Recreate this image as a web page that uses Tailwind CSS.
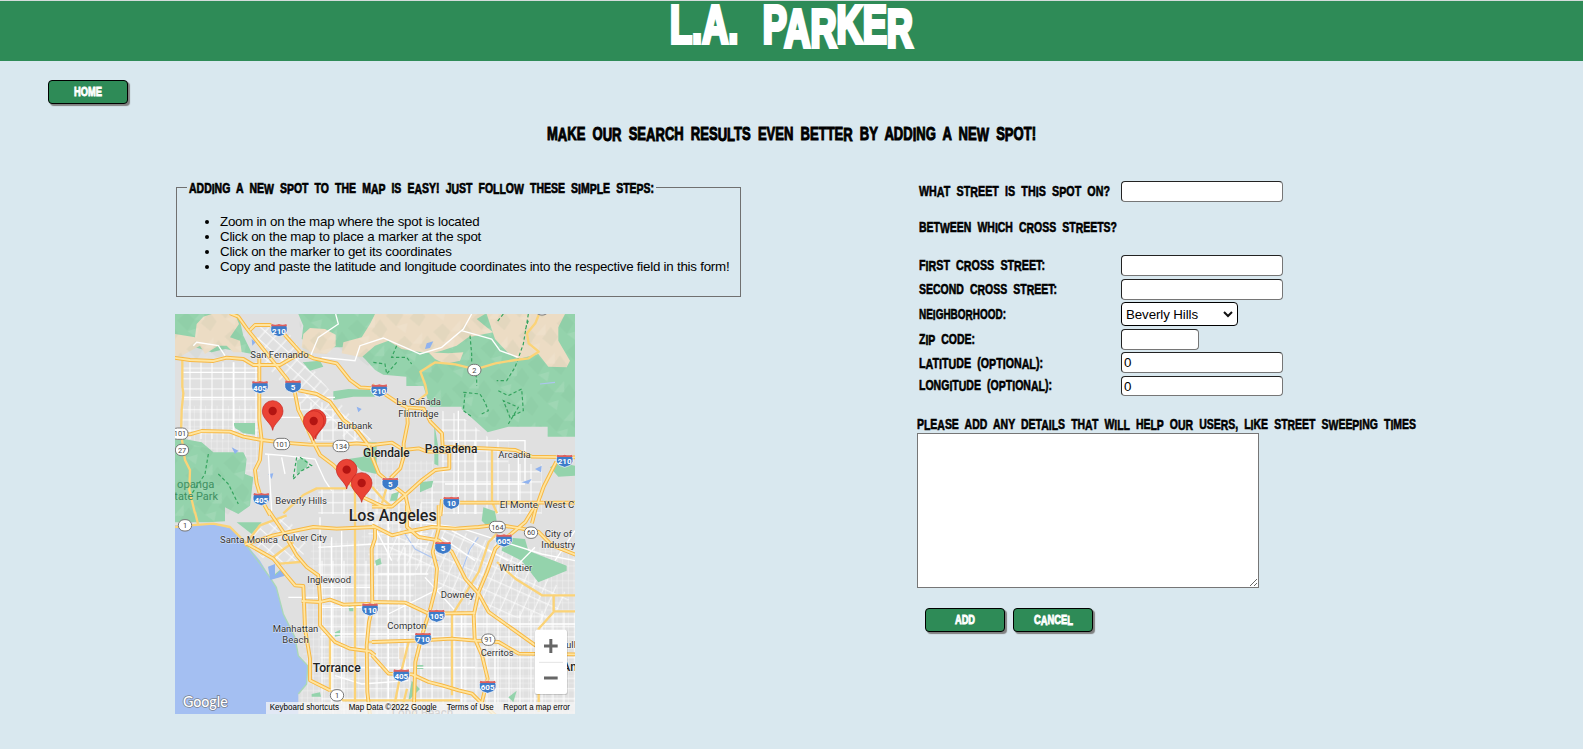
<!DOCTYPE html>
<html lang="en">
<head>
<meta charset="utf-8">
<title>L.A. Parker</title>
<script src="https://cdn.jsdelivr.net/npm/@tailwindcss/browser@4"></script>
</head>
<body class="h-[749px] overflow-hidden bg-[#d9e8ef] font-['Liberation_Sans',sans-serif] text-[13.333px] leading-[15px] text-black">
<header class="flex h-[61px] justify-center border-t border-[#d5dcdc] bg-[#2e8b57]">
  <h1><svg class="block h-[60px] w-[247px] overflow-visible fill-white stroke-white stroke-[4px] text-[53px] font-bold [word-spacing:21px]"><text class="bouncy" data-step="4" x="2" y="42" textLength="243" lengthAdjust="spacingAndGlyphs">L.A. PARKER</text></svg></h1>
</header>

<nav class="pt-[19px] pl-12">
  <button class="flex h-6 w-20 items-center justify-center rounded-[4px] border border-black bg-[#2e8b57] shadow-[2px_2px_1px_#808080]"><svg class="h-4 w-7 overflow-visible fill-white stroke-white stroke-[.9px] text-[13.5px] font-bold"><text class="bouncy" data-step="1" x="0" y="12" textLength="28" lengthAdjust="spacingAndGlyphs">HOME</text></svg></button>
</nav>

<h2 class="mt-[19px] flex justify-center"><svg class="h-[22px] w-[489px] overflow-visible stroke-black stroke-[1px] text-[18.5px] font-bold [word-spacing:5px]"><text class="bouncy" data-step="1.4" x="0" y="16.5" textLength="489" lengthAdjust="spacingAndGlyphs">MAKE OUR SEARCH RESULTS EVEN BETTER BY ADDING A NEW SPOT!</text></svg></h2>

<main class="mt-[35px] flex pl-[175px]">
  <section class="w-[742px] shrink-0">
    <fieldset class="ml-px h-[117px] w-[565px] min-w-0 border border-[#707070] pl-[10px]">
      <legend class="h-[15px] px-[2px]"><svg class="block h-[15px] w-[465px] overflow-visible stroke-black stroke-[.7px] text-[14.5px] font-bold [word-spacing:4.5px]"><text class="bouncy" data-step="1" x="0" y="12.5" textLength="465" lengthAdjust="spacingAndGlyphs">ADDING A NEW SPOT TO THE MAP IS EASY! JUST FOLLOW THESE SIMPLE STEPS:</text></svg></legend>
      <ul class="mt-[19px] ml-[33px] list-outside list-disc tracking-[-0.235px] whitespace-nowrap">
        <li>Zoom in on the map where the spot is located</li>
        <li>Click on the map to place a marker at the spot</li>
        <li>Click on the marker to get its coordinates</li>
        <li>Copy and paste the latitude and longitude coordinates into the respective field in this form!</li>
      </ul>
    </fieldset>

    <svg class="mt-[17px] block h-[400px] w-[400px] font-['Roboto',sans-serif]" viewBox="0 0 1200 1200">
      <defs>
        <pattern id="grid" width="33" height="31" patternUnits="userSpaceOnUse"><path d="M0 8H33M12 0V31" stroke="#fff" stroke-width="2.8"/></pattern>
        <pattern id="fine" width="17" height="22" patternUnits="userSpaceOnUse"><path d="M0 8H17M7 0V22" stroke="#fff" stroke-width="1.5" opacity=".6"/></pattern>
        <pattern id="slant" width="32" height="30" patternUnits="userSpaceOnUse" patternTransform="rotate(42)"><path d="M0 8H32M12 0V30" stroke="#fff" stroke-width="2.6"/></pattern>
        <pattern id="tilt" width="31" height="37" patternUnits="userSpaceOnUse" patternTransform="rotate(24)"><path d="M0 8H31M12 0V37" stroke="#fff" stroke-width="2.4"/></pattern>
        <pattern id="relief" width="120" height="90" patternUnits="userSpaceOnUse" patternTransform="rotate(-18)"><path d="M0 20L35 5L50 35L20 60ZM65 50L100 25L112 60L85 82Z" fill="#5a8060" opacity=".06"/><path d="M50 35L88 12L78 44ZM20 60L55 62L40 88Z" fill="#fff" opacity=".1"/></pattern>
        <symbol id="interstate" viewBox="-26 -20 52 40" overflow="visible"><path d="M-22 -17Q-11 -13 0 -17Q11 -13 22 -17Q31 7 14 15L0 20L-14 15Q-31 7 -22 -17Z" fill="#3d7bc9" stroke="#fff" stroke-width="2"/><path d="M-22 -18Q-11 -14 0 -18Q11 -14 22 -18L24 -11H-24Z" fill="#e0605c"/></symbol>
        <symbol id="route" viewBox="-26 -20 52 40" overflow="visible"><rect x="-24" y="-17" width="48" height="34" rx="16" fill="#fff" stroke="#777" stroke-width="3"/></symbol>
        <symbol id="dot" viewBox="-26 -20 52 40" overflow="visible"><rect x="-20" y="-17" width="40" height="34" rx="17" fill="#fff" stroke="#777" stroke-width="3"/></symbol>
        <symbol id="pin" viewBox="-32 -90 64 92" overflow="visible"><path d="M0 0C-3 -22 -31 -33 -31 -58A31 31 0 0 1 31 -58C31 -33 3 -22 0 0Z" fill="#ea4335" stroke="#c5221f" stroke-width="2"/><circle cy="-58" r="12.5" fill="#b31412"/></symbol>
        <g id="freeways" fill="none">
          <g transform="translate(-15 -12)"><path d="M180 10L205 20L230 55L290 130L350 205L374 245L385 300L410 350L432 400L450 435L490 465L530 505L575 560L650 595M240 60L255 45L300 45L340 70L390 125L430 145L500 160L540 210L570 232L615 235M10 143L60 150L130 153L170 143L220 147L250 165L330 165L390 130M268 145V330L275 390L270 450L255 480L260 520L275 570L300 615M10 370L60 373L95 363L180 365L220 380L275 390L340 398L420 404H520L560 400L615 405M372 238L440 252L480 275L520 330L560 360L595 405L612 440"/></g>
          <g transform="translate(591 -12)"><path d="M0 225L20 240L80 280L105 292L155 296L175 335L210 370L212 410L340 415L430 420L480 440L615 442M105 292L107 340L95 400V440L85 475L55 505M0 405L60 398L95 420L140 415L165 425H230M0 590L60 590L100 555L150 510L190 480L232 475V425M0 440L20 490L55 520L100 555L110 600L120 620M240 578H615M205 618L210 568M553 455L515 530L490 600L480 640"/></g>
          <g transform="translate(-15 594)"><path d="M295 -6L340 60L380 130L410 165L445 190L450 260V340L495 390L540 410L600 418L615 430M225 98L310 70L380 55L430 45L500 50L615 45M395 267L450 270L480 263L520 278L612 275M615 50V80L605 110L607 290L597 330L590 400L592 540L600 610M230 95L310 140L350 190L375 220L400 222L405 350L420 440V505L480 535"/></g>
          <g transform="translate(591 594)"><path d="M0 40L60 70L100 60L180 45L250 50L320 45L360 40L400 42L450 50L500 60L540 100L615 130M105 -20L105 45L140 75L200 85L240 120L280 200L320 245L350 300L420 350L490 400L525 427M200 -20L200 50L182 120L195 170L190 230L175 290L150 370L130 450L125 610M490 -20L460 30L400 80L370 110L345 180L320 240L305 310L308 380L330 430L347 500L330 570M0 270L100 272L170 305L310 303M0 390L150 385L240 380L300 385L380 390L440 425L615 427M0 430L50 485L120 487L170 510L210 520L260 535L300 545L330 575L370 610"/></g>
        </g>
      </defs>
      <rect width="1200" height="1200" fill="#e0e0e0"/>
      <path d="M20 275H255V520H20ZM560 440H780V680H560ZM550 700H1200V1200H370L410 680H600Z" fill="url(#fine)"/>
      <path d="M20 145H255V375H20ZM365 265H480L560 380H400ZM430 525H700V600H430ZM800 290L850 300L940 370L1000 380V600H720L800 450ZM1000 450H1100V600H1000ZM580 620H760V780H580ZM430 740H720L700 1200H440ZM720 890H1200V1170H720Z" fill="url(#grid)"/>
      <path d="M245 40L330 40L440 200L590 380L520 380L370 260L250 130ZM210 670L330 600L400 700L360 760L260 730Z" fill="url(#slant)"/>
      <path d="M640 640L850 650L1000 700L1190 850L1100 930L870 870L750 780L640 730Z" fill="url(#tilt)"/>

      <g fill="#94d3ac">
        <path d="M0 0H190L205 65L232 120L150 105L110 115L60 100L0 130Z"/>
        <path d="M370 0H1200V368H1118V338H1000L938 355L905 325L860 285V278H765L745 216H694V188L625 182L600 168L570 135L560 125L520 100L440 100L380 75L385 35Z"/>
        <path d="M0 370L80 385L115 415L205 415L215 435L210 480L235 490L225 575L190 600L150 580L150 622L100 625L45 625H0Z"/>
        <path d="M175 327H240V362L205 358L180 342ZM475 232L520 225L585 228L600 248H535L475 258ZM383 145L435 140L445 158L405 170ZM580 385H605V480L560 470L520 435L565 428ZM778 330L790 400V455L778 450ZM735 505L775 500L770 520L735 535ZM650 540L672 533L665 560L645 560ZM1125 460L1150 445L1200 455V485L1150 488ZM365 440L385 430L400 445L395 460L365 480ZM600 740L616 732L620 750L604 755ZM990 670L1050 675L1060 710L1110 730L1175 755L1175 770L1090 805L1040 740L980 710ZM925 580L960 592L965 620L940 640L920 620ZM300 780L318 765L310 790L290 795ZM480 955L495 948V965L480 968ZM725 1053H745V1065H725ZM410 1140L435 1135L438 1148H410ZM1000 1150L1025 1130L1015 1165ZM520 875L535 880V892H523ZM710 1100L735 1125L700 1160ZM185 625L260 625L230 660Z"/>
      </g>
      <g fill="#ecdcc4">
        <path d="M65 30L85 8L110 0H180L192 30L165 70L195 80L200 115L175 115L155 95L130 95L90 120L75 95L20 125L0 130V60L60 70Z"/>
        <path d="M385 60L405 42L450 45L482 62V95L455 120L415 118L380 100Z"/>
        <path d="M600 0H930L905 15L935 40L955 55L880 70L845 95L800 110L770 118L740 115L680 105L640 80L600 95L560 130L500 118L505 85L560 70L585 30Z"/>
        <path d="M935 0H1170L1150 40L1150 80L1185 140L1175 160L1120 158L1090 120L1030 135L1000 118L960 75Z"/>
        <path d="M760 115L820 118L865 115L855 140L810 150L780 135Z"/>
        <path d="M672 1000H700V1035H672Z" opacity=".7"/>
      </g>
      <path d="M0 0H200L230 120L0 140ZM370 0H1200V368H1118V338H938L860 278H765L745 216H694V188L600 170L520 115L385 120ZM0 380L215 430L225 590L100 635H0Z" fill="url(#relief)"/>

      <path d="M0 634L50 634L120 630L175 645L213 690L255 740L285 790L304 820L325 900L360 970L370 1025L398 1055L395 1110L370 1140V1200H0Z" fill="#a4bff2"/>
      <path d="M213 692L285 790L304 820L325 900L360 970L370 1025L398 1055L395 1110L370 1140" fill="none" stroke="#a9d8b8" stroke-width="4"/>
      <path d="M279 758L300 750V785L320 765L330 785L286 798ZM755 88L775 82L765 102L750 105ZM230 75L242 85L232 95ZM280 480L295 478L290 495ZM1040 505L1070 495L1060 510ZM1080 465L1100 455L1098 475ZM170 400L190 410L180 420ZM545 278L560 285L550 295Z" fill="#8fb2ef"/>
      <path d="M690 660L720 705L790 740M1095 210L1140 205M860 770L885 705L910 670" fill="none" stroke="#adc5f0" stroke-width="3.5"/>

      <g fill="none" stroke="#fff" stroke-width="4">
        <path d="M55 95L65 85L130 95L150 125M20 175H255M20 250H480M270 310H470M175 145V360M405 130L430 70L490 30L482 0M440 130L540 140L555 95L625 72L690 100L735 120L800 100L865 45L890 0M860 50L950 75L975 110L1030 130M270 420L330 425L420 435L450 500L470 530M690 620L850 640L1100 720L1200 740M640 900L800 820M430 700L600 690M435 610V900M470 670V1170M500 650V1170M440 820H590M440 880H590M440 960H760M340 850H430M430 1060H900M590 620L650 740M750 790L850 900M800 670L900 740M830 650L1000 740M820 380H1050V500M850 290V600M900 380V600M1030 430V560M810 510H1050M760 930H1200M1080 950V1170M860 900V1170M960 1000V1170M480 1085L560 1110L700 1100M600 690H760M610 780H760M640 620V1170M690 700V1100M1140 740L1200 650M1000 780L1080 700M280 420L290 590M320 430L330 480"/>
      </g>
      <g fill="none" stroke="#34a35e" stroke-width="3.5" stroke-dasharray="10 7">
        <path d="M100 420L90 480L50 540M130 480L160 510L190 570M885 65L890 120L890 165L905 190L905 215M865 235L915 240L930 265L940 290L920 300M870 240L865 290L890 308M1060 0L1045 90L1020 160L995 200L965 200M970 230L1000 245L1040 225L1045 290L1005 310L985 260L1030 280L1000 330M665 95L650 130L695 130L710 150M665 145L635 180L630 150L595 145M375 430L410 455L380 470L350 500M365 430L355 490M985 0L965 25M1060 20L1050 50"/>
      </g>

      <g fill="none" stroke="#fbd377" stroke-width="7" stroke-linejoin="round">
        <g transform="translate(-15 -12)"><path d="M37 148V230L40 250L35 300L33 370L45 450L60 480L58 540L75 610M340 610L400 555L440 535H530M555 530V1200"/></g>
        <g transform="translate(591 -12)"><path d="M500 15L490 40L465 70L470 100L500 125L470 145L430 150L370 160L310 178L250 163L190 157L145 185L160 225L165 250L135 275M360 420V575L375 610M0 530L35 570L60 590M50 510L30 580"/></g>
        <g transform="translate(-15 594)"><path d="M15 45L60 40L130 35L180 45L230 95L330 155L390 150M310 135L370 90M225 98L270 40L350 10M480 370V530M75 0L85 40M590 390H620"/></g>
        <g transform="translate(591 594)"><path d="M375 65L350 90L320 180L240 310V550M375 150L430 200L510 250H615M545 250V300L500 350L500 600M545 298H615M110 390L85 490L65 590M105 530L90 590"/></g>
        <path d="M465 1129L505 1159H855"/>
      </g>
      <g stroke="#f7b844" stroke-width="11.5" stroke-linejoin="round"><use href="#freeways"/></g>
      <g stroke="#ffe5a0" stroke-width="5.5" stroke-linejoin="round"><use href="#freeways"/></g>

      <g>
        <use href="#interstate" x="286" y="28" width="52" height="40"/><use href="#interstate" x="229" y="199" width="52" height="40"/><use href="#interstate" x="328" y="197" width="52" height="40"/><use href="#interstate" x="233" y="535" width="52" height="40"/><use href="#interstate" x="587" y="209" width="52" height="40"/><use href="#interstate" x="1143" y="420" width="52" height="40"/><use href="#interstate" x="620" y="489" width="52" height="40"/><use href="#interstate" x="803" y="546" width="52" height="40"/><use href="#interstate" x="778" y="681" width="52" height="40"/><use href="#interstate" x="961" y="659" width="52" height="40"/><use href="#interstate" x="559" y="866" width="52" height="40"/><use href="#interstate" x="759" y="885" width="52" height="40"/><use href="#interstate" x="718" y="954" width="52" height="40"/><use href="#interstate" x="653" y="1064" width="52" height="40"/><use href="#interstate" x="912" y="1098" width="52" height="40"/>
        <use href="#route" x="-11" y="339" width="52" height="40"/><use href="#dot" x="-5" y="388" width="52" height="40"/><use href="#route" x="294" y="370" width="52" height="40"/><use href="#route" x="472" y="376" width="52" height="40"/><use href="#dot" x="872" y="148" width="52" height="40"/><use href="#dot" x="4" y="614" width="52" height="40"/><use href="#dot" x="460" y="1124" width="52" height="40"/><use href="#route" x="941" y="619" width="52" height="40"/><use href="#dot" x="1042" y="636" width="52" height="40"/><use href="#dot" x="914" y="957" width="52" height="40"/><use href="#dot" x="1075" y="-34" width="52" height="40"/>
      </g>
      <g class="fill-white text-[24px] font-bold" text-anchor="middle">
        <text x="312" y="60">210</text><text x="255" y="230">405</text><text x="354" y="228">5</text><text x="259" y="566">405</text><text x="613" y="240">210</text><text x="1169" y="451">210</text><text x="646" y="520">5</text><text x="829" y="577">10</text><text x="804" y="712">5</text><text x="987" y="690">605</text><text x="585" y="897">110</text><text x="785" y="916">105</text><text x="744" y="985">710</text><text x="679" y="1095">405</text><text x="938" y="1129">605</text>
      </g>
      <g class="fill-[#444] text-[22px]" text-anchor="middle">
        <text x="15" y="367">101</text><text x="21" y="416">27</text><text x="320" y="398">101</text><text x="498" y="404">134</text><text x="898" y="176">2</text><text x="30" y="642">1</text><text x="486" y="1152">1</text><text x="967" y="647">164</text><text x="1068" y="664">60</text><text x="940" y="985">91</text>
      </g>
      <g class="fill-[#333] stroke-white/60 stroke-[3px] text-[29px] [paint-order:stroke]">
        <text x="226" y="132" textLength="175" lengthAdjust="spacingAndGlyphs">San Fernando</text><text x="487" y="346" textLength="105" lengthAdjust="spacingAndGlyphs">Burbank</text><text x="664" y="274" textLength="134" lengthAdjust="spacingAndGlyphs">La Cañada</text><text x="670" y="308" textLength="121" lengthAdjust="spacingAndGlyphs">Flintridge</text><text x="970" y="432" textLength="97" lengthAdjust="spacingAndGlyphs">Arcadia</text><text x="974" y="581" textLength="115" lengthAdjust="spacingAndGlyphs">El Monte</text><text x="1107" y="581" textLength="91" lengthAdjust="spacingAndGlyphs">West C</text><text x="301" y="571" textLength="155" lengthAdjust="spacingAndGlyphs">Beverly Hills</text><text x="135" y="687" textLength="174" lengthAdjust="spacingAndGlyphs">Santa Monica</text><text x="320" y="682" textLength="135" lengthAdjust="spacingAndGlyphs">Culver City</text><text x="397" y="807" textLength="131" lengthAdjust="spacingAndGlyphs">Inglewood</text><text x="293" y="954" textLength="137" lengthAdjust="spacingAndGlyphs">Manhattan</text><text x="322" y="987" textLength="79" lengthAdjust="spacingAndGlyphs">Beach</text><text x="1109" y="668" textLength="82" lengthAdjust="spacingAndGlyphs">City of</text><text x="1099" y="702" textLength="102" lengthAdjust="spacingAndGlyphs">Industry</text><text x="973" y="771" textLength="99" lengthAdjust="spacingAndGlyphs">Whittier</text><text x="797" y="852" textLength="101" lengthAdjust="spacingAndGlyphs">Downey</text><text x="637" y="946" textLength="117" lengthAdjust="spacingAndGlyphs">Compton</text><text x="917" y="1025" textLength="99" lengthAdjust="spacingAndGlyphs">Cerritos</text><text x="1173" y="1001">ull</text>
      </g>
      <g class="fill-[#222] stroke-white/60 stroke-[3px] text-[36px] font-medium [paint-order:stroke]">
        <text x="564" y="428" textLength="140" lengthAdjust="spacingAndGlyphs">Glendale</text><text x="749" y="416" textLength="158" lengthAdjust="spacingAndGlyphs">Pasadena</text><text x="413" y="1073" textLength="144" lengthAdjust="spacingAndGlyphs">Torrance</text><text x="1162" y="1072">An</text><text class="text-[47px]" x="521" y="621" textLength="264" lengthAdjust="spacingAndGlyphs">Los Angeles</text><text class="fill-[#777]" x="650" y="1208" textLength="185" lengthAdjust="spacingAndGlyphs">Long Beach</text>
      </g>
      <g class="fill-[#3f8f62] text-[32px]"><text x="6" y="521" textLength="112" lengthAdjust="spacingAndGlyphs">opanga</text><text x="-2" y="558" textLength="131" lengthAdjust="spacingAndGlyphs">tate Park</text></g>

      <use href="#pin" x="261" y="259" width="64" height="92"/><use href="#pin" x="390" y="285" width="64" height="92"/><use href="#pin" x="384" y="289" width="64" height="92"/><use href="#pin" x="483" y="435" width="64" height="92"/><use href="#pin" x="528" y="475" width="64" height="92"/>

      <rect x="273" y="1164" width="927" height="36" fill="#f5f5f5" opacity=".75"/>
      <g class="fill-black font-['Liberation_Sans',sans-serif] text-[25px]"><text x="284" y="1188" textLength="208" lengthAdjust="spacingAndGlyphs">Keyboard shortcuts</text><text x="521" y="1188" textLength="264" lengthAdjust="spacingAndGlyphs">Map Data ©2022 Google</text><text x="815" y="1188" textLength="141" lengthAdjust="spacingAndGlyphs">Terms of Use</text><text x="985" y="1188" textLength="200" lengthAdjust="spacingAndGlyphs">Report a map error</text></g>
      <text class="fill-white stroke-[#666]/70 stroke-[5px] font-['Lato',sans-serif] text-[44px] font-medium [paint-order:stroke]" x="24" y="1180" textLength="134" lengthAdjust="spacingAndGlyphs">Google</text>
      <rect x="1078" y="948" width="100" height="195" rx="6" fill="#000" opacity=".14"/><rect x="1080" y="947" width="96" height="193" rx="6" fill="#fff"/><path d="M1092 1045H1164" stroke="#e4e4e4" stroke-width="3"/>
      <path d="M1107 996H1148M1127.500 975V1017M1107 1092H1148" stroke="#666" stroke-width="9"/>
    </svg>
  </section>

  <form class="w-[520px] pt-px">
    <div class="grid grid-cols-[204px_1fr] stroke-black stroke-[.6px] [&_svg]:overflow-visible [&_svg]:h-[15px] [&_svg]:ml-[2px] [&_svg]:text-[15px] [&_svg]:font-bold [&_svg]:[word-spacing:4.5px] [&_input]:block [&_input]:h-[21px] [&_input]:rounded-[4px] [&_input]:border [&_input]:border-[#767676] [&_input]:border-t-[#222] [&_input]:border-l-[#222] [&_input]:bg-white [&_input]:px-[2px] [&_input]:text-[13.333px]">
      <label class="pt-[3px]"><svg class="w-[191px]"><text class="bouncy" data-step="1" x="0" y="12" textLength="191" lengthAdjust="spacingAndGlyphs">WHAT STREET IS THIS SPOT ON?</text></svg></label><div class="h-[37px]"><input class="w-[162px]"></div>
      <div class="col-span-2 h-[37px] pt-[2px]"><svg class="w-[199px]"><text class="bouncy" data-step="1" x="0" y="12" textLength="198" lengthAdjust="spacingAndGlyphs">BETWEEN WHICH CROSS STREETS?</text></svg></div>
      <label class="pt-[3px]"><svg class="w-[127px]"><text class="bouncy" data-step="1" x="0" y="12" textLength="126" lengthAdjust="spacingAndGlyphs">FIRST CROSS STREET:</text></svg></label><div class="h-6"><input class="w-[162px]"></div>
      <label class="pt-[3px]"><svg class="w-[139px]"><text class="bouncy" data-step="1" x="0" y="12" textLength="138" lengthAdjust="spacingAndGlyphs">SECOND CROSS STREET:</text></svg></label><div class="h-[23px]"><input class="w-[162px]"></div>
      <label class="pt-[5px]"><svg class="w-[87px]"><text class="bouncy" data-step="1" x="0" y="12" textLength="87" lengthAdjust="spacingAndGlyphs">NEIGHBORHOOD:</text></svg></label><div class="h-[27px]"><div class="flex h-6 w-[117px] items-center justify-between rounded-[4px] border border-black bg-white pr-[4px] pl-[4px] text-[13.333px]"><span class="tracking-[-0.1px]">Beverly Hills</span><svg class="!h-[7px] w-[10px] fill-none stroke-[#111] stroke-2" viewBox="0 0 10 7"><path d="M1 1L5 5L9 1"/></svg></div></div>
      <label class="pt-[3px]"><svg class="w-[56px]"><text class="bouncy" data-step="1" x="0" y="12" textLength="56" lengthAdjust="spacingAndGlyphs">ZIP CODE:</text></svg></label><div class="h-[23px]"><input class="w-[78px]"></div>
      <label class="pt-[4px]"><svg class="w-[124px]"><text class="bouncy" data-step="1" x="0" y="12" textLength="124" lengthAdjust="spacingAndGlyphs">LATITUDE (OPTIONAL):</text></svg></label><div class="h-6"><input class="w-[162px]" value="0"></div>
      <label class="pt-[2px]"><svg class="w-[133px]"><text class="bouncy" data-step="1" x="0" y="12" textLength="133" lengthAdjust="spacingAndGlyphs">LONGITUDE (OPTIONAL):</text></svg></label><div class="h-[21px]"><input class="!h-5 w-[162px]" value="0"></div>
    </div>
    <svg class="mt-5 block h-4 w-[499px] overflow-visible stroke-black stroke-[.6px] text-[14.5px] font-bold [word-spacing:4.5px]"><text class="bouncy" data-step="1" x="0" y="11.5" textLength="499" lengthAdjust="spacingAndGlyphs">PLEASE ADD ANY DETAILS THAT WILL HELP OUR USERS, LIKE STREET SWEEPING TIMES</text></svg>
    <textarea class="block h-[155px] w-[342px] resize border border-[#767676] bg-white"></textarea>
    <div class="mt-5 ml-2 flex gap-2">
      <button type="button" class="flex h-6 w-20 items-center justify-center rounded-[4px] border border-black bg-[#2e8b57] shadow-[2px_2px_1px_#808080]"><svg class="h-4 w-5 overflow-visible fill-white stroke-white stroke-[.9px] text-[13.5px] font-bold"><text class="bouncy" data-step="1" x="0" y="12" textLength="20" lengthAdjust="spacingAndGlyphs">ADD</text></svg></button>
      <button type="button" class="flex h-6 w-20 items-center justify-center rounded-[4px] border border-black bg-[#2e8b57] shadow-[2px_2px_1px_#808080]"><svg class="h-4 w-[39px] overflow-visible fill-white stroke-white stroke-[.9px] text-[13.5px] font-bold"><text class="bouncy" data-step="1" x="0" y="12" textLength="39" lengthAdjust="spacingAndGlyphs">CANCEL</text></svg></button>
    </div>
  </form>
</main>
<script>
  // Uneven baseline of the display lettering: some capitals hang lower than the rest.
  document.querySelectorAll('.bouncy').forEach(function (t) {
    var low = 'ARPUIJLW', s = t.textContent, step = +t.dataset.step, prev = 0;
    t.setAttribute('dy', Array.from(s).map(function (c, i) {
      var start = i === 0 || s[i - 1] === ' ' || s[i - 1] === '.';
      var y = !start && low.indexOf(c) >= 0 ? step : 0, d = y - prev;
      prev = y;
      return d;
    }).join(' '));
  });
</script>
</body>
</html>
